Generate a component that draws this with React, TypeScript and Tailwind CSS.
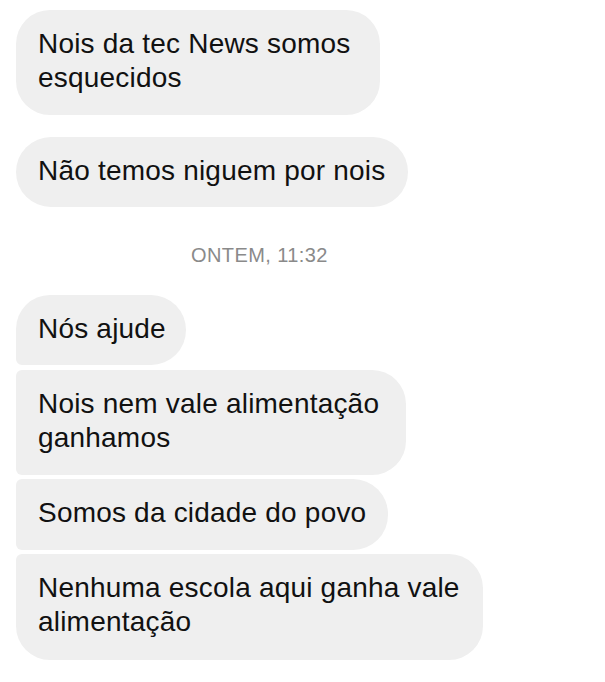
import React from "react";

type B = {
  lines: string[];
  w: number;
  h: number;
  radius: string;
  mt: string;
};

const Bubble = ({ lines, w, h, radius, mt }: B) => (
  <div
    className={`ml-4 bg-[#efefef] ${radius} ${mt} pl-[22px] pt-[17px] text-[28px] leading-[34px] text-[#111111] tracking-[0.2px]`}
    style={{ width: w, height: h }}
  >
    {lines.map((l, i) => (
      <div key={i} className="whitespace-nowrap">
        {l}
      </div>
    ))}
  </div>
);

export default function App() {
  return (
    <div
      className="w-[605px] h-[682px] bg-white overflow-hidden pt-[10px]"
      style={{ fontFamily: '"Liberation Sans", Arial, sans-serif' }}
    >
      <Bubble
        lines={["Nois da tec News somos", "esquecidos"]}
        w={364}
        h={105}
        radius="rounded-[34px]"
        mt="mt-0"
      />
      <Bubble
        lines={["Não temos niguem por nois"]}
        w={392}
        h={70}
        radius="rounded-[35px]"
        mt="mt-[22px]"
      />
      <div className="mt-[36px] pl-[191px] text-[20px] leading-[24px] tracking-[0.4px] text-[#8a8a8a]">
        ONTEM, 11:32
      </div>
      <Bubble
        lines={["Nós ajude"]}
        w={170}
        h={70}
        radius="rounded-tl-[34px] rounded-tr-[35px] rounded-br-[35px] rounded-bl-[6px]"
        mt="mt-[28px]"
      />
      <Bubble
        lines={["Nois nem vale alimentação", "ganhamos"]}
        w={390}
        h={105}
        radius="rounded-tl-[6px] rounded-bl-[6px] rounded-tr-[34px] rounded-br-[34px]"
        mt="mt-[5px]"
      />
      <Bubble
        lines={["Somos da cidade do povo"]}
        w={372}
        h={71}
        radius="rounded-tl-[6px] rounded-bl-[6px] rounded-tr-[35px] rounded-br-[35px]"
        mt="mt-[4px]"
      />
      <Bubble
        lines={["Nenhuma escola aqui ganha vale", "alimentação"]}
        w={467}
        h={106}
        radius="rounded-tl-[6px] rounded-bl-[34px] rounded-tr-[34px] rounded-br-[34px]"
        mt="mt-[4px]"
      />
    </div>
  );
}
